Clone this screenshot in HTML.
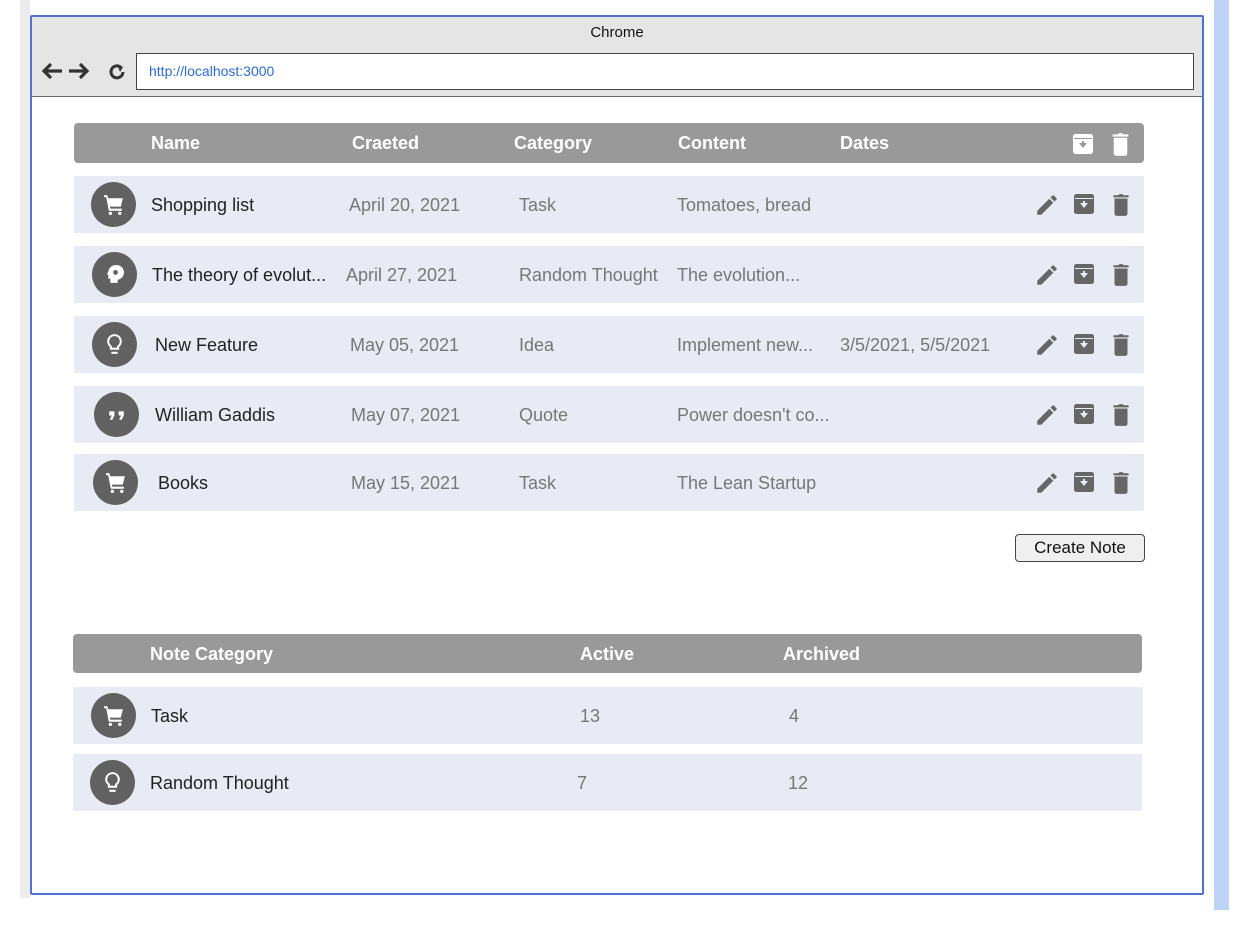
<!DOCTYPE html>
<html><head><meta charset="utf-8"><style>
*{margin:0;padding:0;box-sizing:border-box}
body{width:1260px;height:934px;background:#fff;position:relative;overflow:hidden;font-family:"Liberation Sans",Arial,sans-serif}
.a{position:absolute}
.hdr{background:#999;border-radius:4px;color:#fff;font-weight:bold;font-size:18px}
.hdr span{position:absolute;top:10px}
.row{background:#e8eaf4}
.row span{position:absolute;top:19px;font-size:18px;color:#777;white-space:nowrap}
.row span.n{color:#222}
.circ{position:absolute;width:45px;height:45px;border-radius:50%;background:#616161;top:6px}
.circ svg{position:absolute;left:10px;top:10px}
.ic{position:absolute;top:16px}
</style></head><body>
<svg width="0" height="0" style="position:absolute">
<defs>
<symbol id="cart" viewBox="0 0 24 24"><path fill="#fff" d="M3 3h3l1 3h14l-2 8H8.5L9 16h11v2H7.5L5 5H3z"/><circle cx="9" cy="20.5" r="1.6" fill="#fff"/><circle cx="18" cy="20.5" r="1.6" fill="#fff"/></symbol>
<symbol id="bulb" viewBox="0 0 24 24"><path fill="none" stroke="#fff" stroke-width="2" d="M12 3a6 6 0 0 0-3.5 10.9V16h7v-2.1A6 6 0 0 0 12 3z"/><path stroke="#fff" stroke-width="2" d="M9 20h6"/></symbol>
<symbol id="head" viewBox="0 0 24 24"><path fill="#fff" d="M13 3a7 7 0 0 0-7 6.5L4.5 12H6v4h2v4h7v-3a7 7 0 0 0-2-14z"/><circle cx="13" cy="10" r="2.3" fill="#616161"/></symbol>
<symbol id="quote" viewBox="0 0 24 24"><path fill="#fff" d="M5 9h5v4l-2 4H5.5l2-4H5zM14 9h5v4l-2 4h-2.5l2-4H14z"/></symbol>
<symbol id="pen" viewBox="0 0 24 24"><path fill="#666" d="M3 17.3V21h3.7L17.8 9.9l-3.7-3.7zM20.7 7a1 1 0 0 0 0-1.4l-2.3-2.3a1 1 0 0 0-1.4 0l-1.8 1.8 3.7 3.7z"/></symbol>
<symbol id="arch" viewBox="0 0 24 24"><rect x="2" y="2" width="20" height="20" rx="2.5" fill="currentColor"/><path d="M3 6.5h18" stroke="var(--bg)" stroke-width="1"/><path d="M8 11h3V9h2v2h3l-4 5z" fill="var(--bg)"/></symbol>
<symbol id="trash" viewBox="0 0 24 24"><path fill="currentColor" d="M6 6h12v14a2 2 0 0 1-2 2H8a2 2 0 0 1-2-2zM5 3h4.5l1-1h3l1 1H19v2H5z"/></symbol>
</defs></svg>

<div class="a" style="left:20px;top:0;width:10px;height:898px;background:#ececec"></div>
<div class="a" style="left:1214px;top:0;width:15px;height:910px;background:#bcd3f6"></div>
<div class="a" style="left:30px;top:15px;width:1174px;height:880px;border:2px solid #4f72cc;border-radius:2px"></div>
<div class="a" style="left:32px;top:17px;width:1170px;height:80px;background:#e5e5e5;border-bottom:1px solid #666"></div>
<div class="a" style="left:32px;top:24px;width:1170px;text-align:center;font-size:15px;color:#111">Chrome</div>
<svg class="a" style="left:40px;top:61px" width="90" height="20" viewBox="0 0 90 20">
<path d="M22 10H5M11 3L4 10l7 7" stroke="#333" stroke-width="3.2" fill="none"/>
<path d="M46 10H29M40 3l7 7-7 7" stroke="#333" stroke-width="3.2" fill="none"/>
<path d="M83 11a6 6 0 1 1-2.5-5" stroke="#333" stroke-width="3" fill="none"/><path d="M77 3l6 3-3 5z" fill="#333"/>
</svg>
<div class="a" style="left:136px;top:53px;width:1058px;height:37px;background:#fff;border:1.5px solid #444"></div>
<div class="a" style="left:149px;top:63px;font-size:14px;color:#2a6ad8">http://localhost:3000</div>

<!-- table 1 -->
<div class="a hdr" style="left:74px;top:123px;width:1070px;height:40px">
<span style="left:77px">Name</span><span style="left:278px">Craeted</span><span style="left:440px">Category</span><span style="left:604px">Content</span><span style="left:766px">Dates</span>
<svg style="position:absolute;left:997px;top:9px;color:#fff;--bg:#999" width="24" height="24"><use href="#arch"/></svg>
<svg style="position:absolute;left:1033px;top:8px;color:#fff" width="27" height="27"><use href="#trash"/></svg>
</div>

<div class="a row" style="left:74px;top:176px;width:1070px;height:57px;--bg:#e8eaf4"><div class="circ" style="left:17px"><svg width="25" height="25"><use href="#cart"/></svg></div><span class="n" style="left:77px">Shopping list</span><span style="left:275px">April 20, 2021</span><span style="left:445px">Task</span><span style="left:603px">Tomatoes, bread</span>
<svg class="ic" style="left:960px;color:#666" width="26" height="26"><use href="#pen"/></svg><svg class="ic" style="left:998px;color:#666" width="24" height="24"><use href="#arch"/></svg><svg class="ic" style="left:1034px;color:#666" width="26" height="26"><use href="#trash"/></svg></div>

<div class="a row" style="left:74px;top:246px;width:1070px;height:57px;--bg:#e8eaf4"><div class="circ" style="left:18px"><svg width="25" height="25"><use href="#head"/></svg></div><span class="n" style="left:78px">The theory of evolut...</span><span style="left:272px">April 27, 2021</span><span style="left:445px">Random Thought</span><span style="left:603px">The evolution...</span>
<svg class="ic" style="left:960px;color:#666" width="26" height="26"><use href="#pen"/></svg><svg class="ic" style="left:998px;color:#666" width="24" height="24"><use href="#arch"/></svg><svg class="ic" style="left:1034px;color:#666" width="26" height="26"><use href="#trash"/></svg></div>

<div class="a row" style="left:74px;top:316px;width:1070px;height:57px;--bg:#e8eaf4"><div class="circ" style="left:18px"><svg width="25" height="25"><use href="#bulb"/></svg></div><span class="n" style="left:81px">New Feature</span><span style="left:276px">May 05, 2021</span><span style="left:445px">Idea</span><span style="left:603px">Implement new...</span><span style="left:766px">3/5/2021, 5/5/2021</span>
<svg class="ic" style="left:960px;color:#666" width="26" height="26"><use href="#pen"/></svg><svg class="ic" style="left:998px;color:#666" width="24" height="24"><use href="#arch"/></svg><svg class="ic" style="left:1034px;color:#666" width="26" height="26"><use href="#trash"/></svg></div>

<div class="a row" style="left:74px;top:386px;width:1070px;height:57px;--bg:#e8eaf4"><div class="circ" style="left:20px"><svg width="25" height="25"><use href="#quote"/></svg></div><span class="n" style="left:81px">William Gaddis</span><span style="left:277px">May 07, 2021</span><span style="left:445px">Quote</span><span style="left:603px">Power doesn't co...</span>
<svg class="ic" style="left:960px;color:#666" width="26" height="26"><use href="#pen"/></svg><svg class="ic" style="left:998px;color:#666" width="24" height="24"><use href="#arch"/></svg><svg class="ic" style="left:1034px;color:#666" width="26" height="26"><use href="#trash"/></svg></div>

<div class="a row" style="left:74px;top:454px;width:1070px;height:57px;--bg:#e8eaf4"><div class="circ" style="left:19px"><svg width="25" height="25"><use href="#cart"/></svg></div><span class="n" style="left:84px">Books</span><span style="left:277px">May 15, 2021</span><span style="left:445px">Task</span><span style="left:603px">The Lean Startup</span>
<svg class="ic" style="left:960px;color:#666" width="26" height="26"><use href="#pen"/></svg><svg class="ic" style="left:998px;color:#666" width="24" height="24"><use href="#arch"/></svg><svg class="ic" style="left:1034px;color:#666" width="26" height="26"><use href="#trash"/></svg></div>

<div class="a" style="left:1015px;top:534px;width:130px;height:28px;border:1px solid #444;border-radius:4px;background:#efefef;font-size:17px;text-align:center;line-height:26px;color:#111">Create Note</div>

<!-- table 2 -->
<div class="a hdr" style="left:73px;top:634px;width:1069px;height:39px">
<span style="left:77px">Note Category</span><span style="left:507px">Active</span><span style="left:710px">Archived</span>
</div>
<div class="a row" style="left:73px;top:687px;width:1070px;height:57px"><div class="circ" style="left:18px"><svg width="25" height="25"><use href="#cart"/></svg></div><span class="n" style="left:78px">Task</span><span style="left:507px">13</span><span style="left:716px">4</span></div>
<div class="a row" style="left:73px;top:754px;width:1069px;height:57px"><div class="circ" style="left:17px"><svg width="25" height="25"><use href="#bulb"/></svg></div><span class="n" style="left:77px">Random Thought</span><span style="left:504px">7</span><span style="left:715px">12</span></div>
</body></html>
